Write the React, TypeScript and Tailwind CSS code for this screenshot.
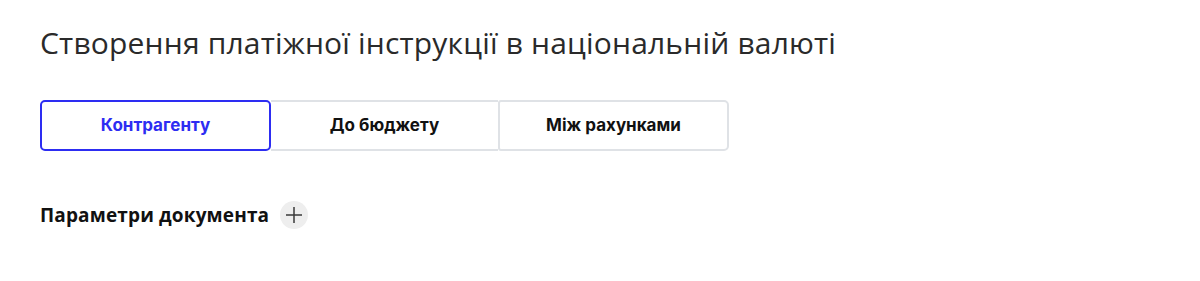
export default function App() {
  const tabs = ["Контрагенту", "До бюджету", "Між рахунками"];
  const active = 0;

  return (
    <div className="min-h-[281px] w-full bg-white pl-10 pt-[23px] font-['Open_Sans',sans-serif]">
      <h1 className="text-[30px] leading-[40px] font-normal tracking-[0.18px] text-[#2a2a2a]">
        Створення платіжної інструкції в національній валюті
      </h1>

      <div className="mt-[37px] flex w-[689px] font-['Inter',sans-serif]">
        {tabs.map((t, i) => (
          <button
            key={t}
            className={`h-[51px] flex-1 text-[17px] font-bold ${
              i === active
                ? "rounded-[5px] border-2 border-[#2d2df2] text-[#2d2df2]"
                : i === tabs.length - 1
                  ? "rounded-r-[5px] rounded-l-[3px] border-2 border-[#dfe2e6] text-[#111]"
                  : "border-y-2 border-[#dfe2e6] text-[#111]"
            }`}
          >
            {t}
          </button>
        ))}
      </div>

      <div className="mt-[50px] flex items-center gap-[11px]">
        <span className="text-[19px] font-bold tracking-[0.15px] text-[#111]">Параметри документа</span>
        <span className="flex h-[28px] w-[28px] items-center justify-center rounded-full bg-[#eeeeee]">
          <svg width="18" height="18" viewBox="0 0 18 18" fill="none">
            <path d="M9 1v16M1 9h16" stroke="#3a3a3a" strokeWidth="1.5" />
          </svg>
        </span>
      </div>
    </div>
  );
}
